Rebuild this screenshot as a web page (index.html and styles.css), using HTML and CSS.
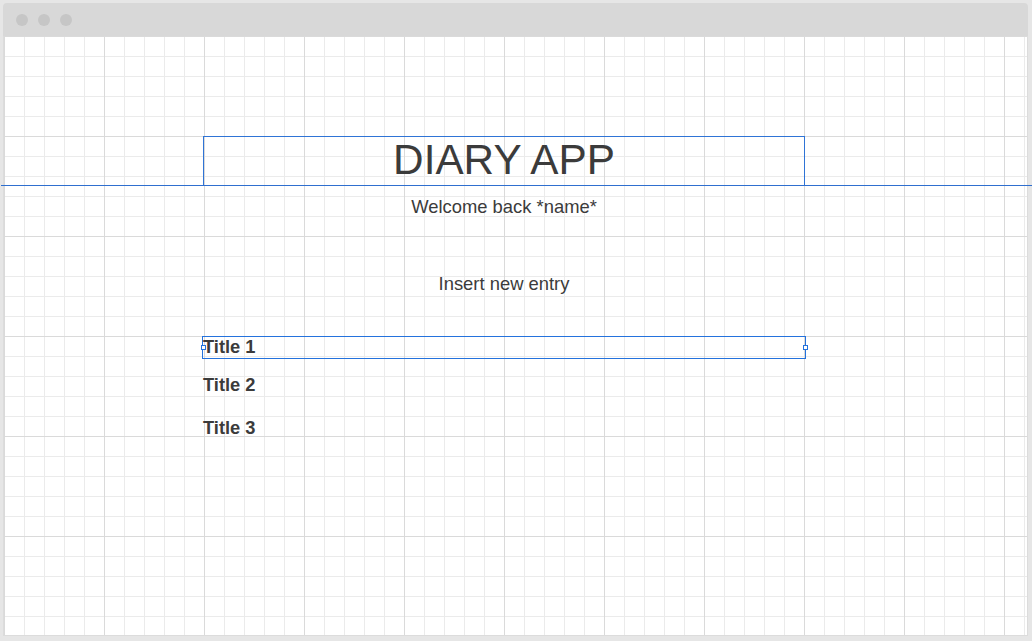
FILE: index.html
```html
<!DOCTYPE html>
<html lang="en">
<head>
<meta charset="utf-8">
<title>Diary App</title>
<link rel="stylesheet" href="styles.css">
</head>
<body>
<div class="window">
  <div class="titlebar">
    <span class="dot"></span><span class="dot"></span><span class="dot"></span>
  </div>
  <div class="canvas">
    <div class="column">
      <div class="header">DIARY APP</div>
      <p class="welcome">Welcome back *name*</p>
      <p class="insert">Insert new entry</p>
      <div class="entry selected">Title 1<span class="handle left"></span><span class="handle right"></span></div>
      <div class="entry second">Title 2</div>
      <div class="entry third">Title 3</div>
    </div>
  </div>
</div>
</body>
</html>
```

FILE: styles.css
```css
* { box-sizing: border-box; }
html, body { margin: 0; padding: 0; }
body {
  background: #e6e6e6;
  font-family: "Liberation Sans", Arial, sans-serif;
  color: #3b3b3b;
  width: 1032px;
  height: 641px;
  overflow: hidden;
}
.window {
  margin: 3px 0 0 3px;
  width: 1025px;
  height: 633px;
  display: flex;
  flex-direction: column;
}
.titlebar {
  height: 33px;
  background: #d8d8d8;
  border-radius: 4px 4px 0 0;
  display: flex;
  align-items: center;
  gap: 10px;
  padding-left: 13px;
}
.dot {
  width: 12px;
  height: 12px;
  border-radius: 50%;
  background: #c6c6c6;
}
.canvas {
  height: 600px;
  border: 1px solid #dcdcdc;
  border-top: none;
  background-color: #ffffff;
  background-image:
    linear-gradient(to right, #dadada 1px, transparent 1px),
    linear-gradient(to bottom, #dadada 1px, transparent 1px),
    linear-gradient(to right, #ebebeb 1px, transparent 1px),
    linear-gradient(to bottom, #ebebeb 1px, transparent 1px);
  background-size: 100px 100px, 100px 100px, 20px 20px, 20px 20px;
  padding: 100px 0 0 199px;
}
.column {
  width: 602px;
  display: flex;
  flex-direction: column;
}
.header {
  position: relative;
  height: 49px;
  border: 1px solid #2f74d6;
  border-bottom: none;
  text-align: center;
  font-size: 42.3px;
  line-height: 46px;
}
.header::after {
  content: "";
  position: absolute;
  left: -203px;
  top: 100%;
  width: 1032px;
  height: 1px;
  background: #2f6fcf;
}
.welcome {
  margin: 11px 0 0;
  text-align: center;
  font-size: 18.4px;
  line-height: 22px;
}
.insert {
  margin: 55px 0 0;
  text-align: center;
  font-size: 18.4px;
  line-height: 22px;
}
.entry {
  font-size: 18.3px;
  font-weight: bold;
  line-height: 21px;
}
.selected {
  position: relative;
  margin: 41px -1px 0 -1px;
  border: 1px solid #2472dd;
  height: 23px;
  line-height: 20px;
}
.second { margin-top: 15px; }
.third { margin-top: 22px; }
.handle {
  position: absolute;
  top: 8px;
  width: 5px;
  height: 5px;
  border: 1px solid #2472dd;
  background: #ffffff;
}
.handle.left { left: -2px; }
.handle.right { right: -3px; }
```
